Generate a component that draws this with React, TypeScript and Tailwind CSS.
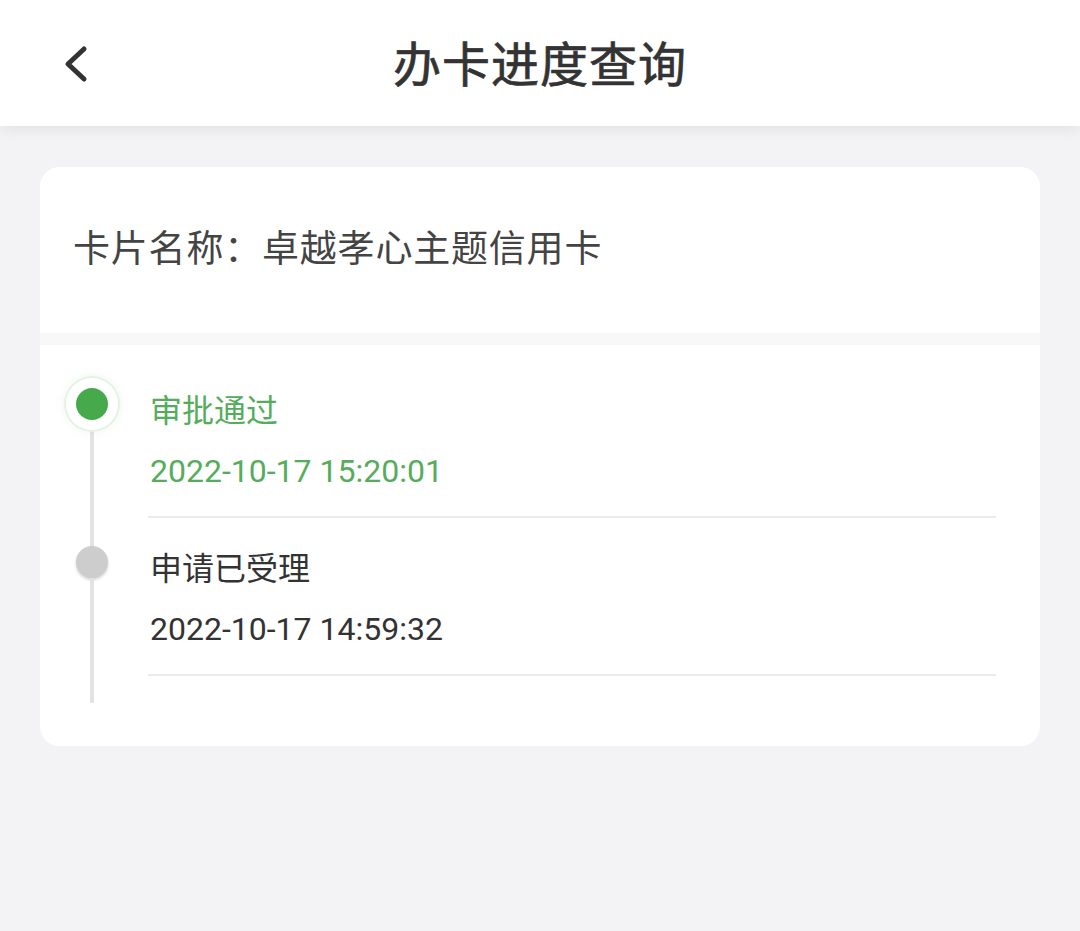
// Card application progress page
interface Step {
  title: string;
  time: string;
  active: boolean;
}

const steps: Step[] = [
  { title: "审批通过", time: "2022-10-17 15:20:01", active: true },
  { title: "申请已受理", time: "2022-10-17 14:59:32", active: false },
];

function StepRow({ step, first }: { step: Step; first: boolean }) {
  return (
    <div className="flex">
      <div className="w-[104px] flex flex-col items-center">
        {first ? (
          <div className="h-[28px]" />
        ) : (
          <div className="w-[4px] h-[28px] bg-[#e3e3e3]" />
        )}
        {step.active ? (
          <div className="relative z-10 w-[32px] h-[32px] rounded-full bg-[#46aa4c] shadow-[0_0_0_10px_#ffffff,0_0_0_12px_#e6f2e6,0_0_10px_12px_rgba(76,175,80,0.10)]" />
        ) : (
          <div className="w-[32px] h-[32px] rounded-full bg-[#cdcdcd] shadow-[0_2px_3px_rgba(0,0,0,0.18)]" />
        )}
        <div className="w-[4px] flex-1 bg-[#e3e3e3]" />
      </div>
      <div className="flex-1 ml-[4px] mr-[44px] pt-[31px] pb-[25px] border-b-2 border-[#ebebeb]">
        <div
          className={`pl-[2px] text-[32px] leading-[40px] ${
            step.active ? "text-[#55ad5b]" : "text-[#333333]"
          }`}
        >
          {step.title}
        </div>
        <div
          className={`pl-[2px] mt-[20px] text-[32px] leading-[40px] ${
            step.active ? "text-[#55ad5b]" : "text-[#333333]"
          }`}
        >
          {step.time}
        </div>
      </div>
    </div>
  );
}

export default function App() {
  return (
    <div
      className="w-[1080px] h-[931px] bg-[#f3f3f5] overflow-hidden"
      style={{ fontFamily: 'Roboto, "Noto Sans CJK SC", sans-serif' }}
    >
      <div className="relative z-10 h-[126px] bg-white flex items-center shadow-[0_4px_14px_rgba(0,0,0,0.07)]">
        <div className="w-[140px] pl-[60px] pt-[2px] flex items-center">
          <svg width="30" height="40" viewBox="0 0 30 40" fill="none">
            <polyline
              points="24,5 8,20 24,35"
              stroke="#333333"
              strokeWidth="5"
              strokeLinecap="round"
              strokeLinejoin="round"
            />
          </svg>
        </div>
        <div className="flex-1 pt-[6px] text-center text-[48px] font-normal text-[#333333] tracking-[1px] [-webkit-text-stroke:0.7px_#333333]">
          办卡进度查询
        </div>
        <div className="w-[140px]" />
      </div>

      <div className="mx-[40px] mt-[41px] bg-white rounded-[20px] overflow-hidden">
        <div className="h-[166px] flex items-center pl-[33px] text-[37px] tracking-[0.8px] text-[#444444]">
          卡片名称：卓越孝心主题信用卡
        </div>
        <div className="h-[12px] bg-[#f8f8f8]" />
        <div className="pt-[15px] pb-[43px]">
          {steps.map((s, i) => (
            <StepRow key={s.time} step={s} first={i === 0} />
          ))}
          <div className="w-[104px] h-[27px] flex justify-center">
            <div className="w-[4px] h-full bg-[#e3e3e3]" />
          </div>
        </div>
      </div>
    </div>
  );
}
